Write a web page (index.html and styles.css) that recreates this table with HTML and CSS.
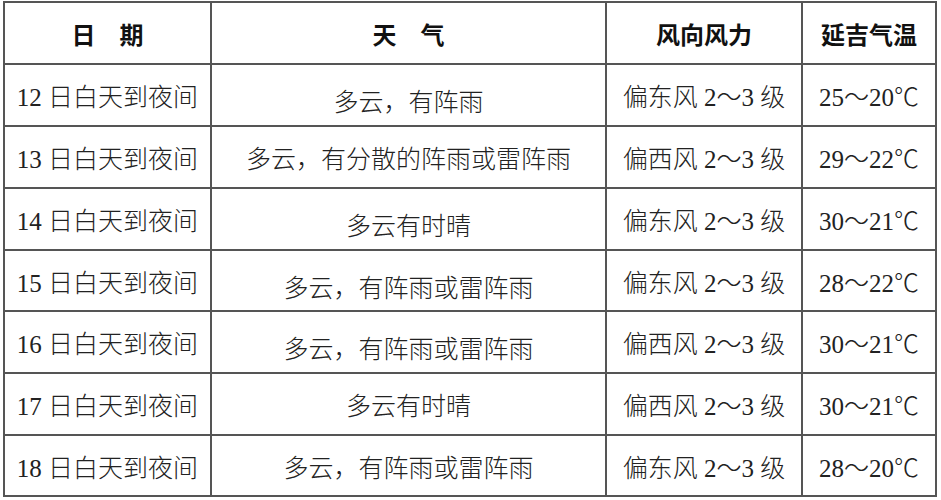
FILE: index.html
```html
<!DOCTYPE html>
<html lang="zh-CN">
<head>
<meta charset="utf-8">
<title>延吉天气预报</title>
<link rel="stylesheet" href="styles.css">
</head>
<body>
<div class="page">
  <table class="forecast">
    <colgroup>
      <col class="c-date">
      <col class="c-weather">
      <col class="c-wind">
      <col class="c-temp">
    </colgroup>
    <thead>
      <tr class="row">
        <th>日　期</th>
        <th>天　气</th>
        <th>风向风力</th>
        <th>延吉气温</th>
      </tr>
    </thead>
    <tbody>
      <tr class="row">
        <td>12 日白天到夜间</td>
        <td class="low">多云，有阵雨</td>
        <td>偏东风 2～3 级</td>
        <td>25～20℃</td>
      </tr>
      <tr class="row">
        <td>13 日白天到夜间</td>
        <td>多云，有分散的阵雨或雷阵雨</td>
        <td>偏西风 2～3 级</td>
        <td>29～22℃</td>
      </tr>
      <tr class="row">
        <td>14 日白天到夜间</td>
        <td class="low">多云有时晴</td>
        <td>偏东风 2～3 级</td>
        <td>30～21℃</td>
      </tr>
      <tr class="row short">
        <td>15 日白天到夜间</td>
        <td class="low">多云，有阵雨或雷阵雨</td>
        <td>偏东风 2～3 级</td>
        <td>28～22℃</td>
      </tr>
      <tr class="row">
        <td>16 日白天到夜间</td>
        <td class="low">多云，有阵雨或雷阵雨</td>
        <td>偏西风 2～3 级</td>
        <td>30～21℃</td>
      </tr>
      <tr class="row">
        <td>17 日白天到夜间</td>
        <td>多云有时晴</td>
        <td>偏西风 2～3 级</td>
        <td>30～21℃</td>
      </tr>
      <tr class="row short">
        <td>18 日白天到夜间</td>
        <td>多云，有阵雨或雷阵雨</td>
        <td>偏东风 2～3 级</td>
        <td>28～20℃</td>
      </tr>
    </tbody>
  </table>
</div>
</body>
</html>
```

FILE: styles.css
```css
html, body {
  margin: 0;
  padding: 0;
  background: #ffffff;
}

.page {
  padding: 1px 0 0 3px;
}

.forecast {
  border-collapse: collapse;
  table-layout: fixed;
  width: 934px;
  font-family: "Liberation Serif", "Noto Sans CJK SC", serif;
  font-size: 25px;
  font-weight: 300;
  color: #222222;
}

.c-date { width: 207px; }
.c-weather { width: 395px; }
.c-wind { width: 196px; }
.c-temp { width: 134px; }

.forecast th,
.forecast td {
  border: 2px solid #555555;
  padding: 0;
  text-align: center;
  vertical-align: middle;
  white-space: nowrap;
}

.forecast th {
  font-family: "Noto Sans CJK SC", sans-serif;
  font-weight: 700;
  font-size: 24px;
  color: #111111;
}

.row { height: 62px; }
.row.short { height: 61px; }

.forecast td.low {
  padding-top: 10px;
}
```
